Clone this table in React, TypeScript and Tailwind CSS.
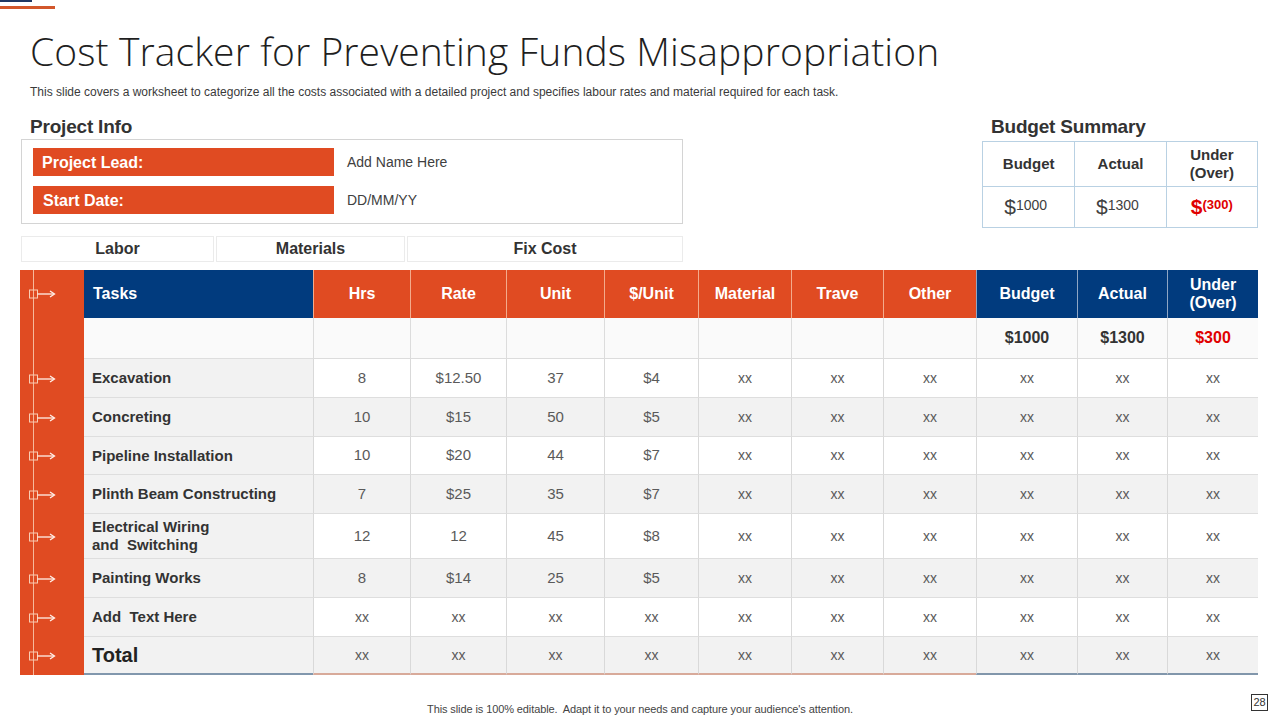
const ORANGE_HEADERS = ["Hrs", "Rate", "Unit", "$/Unit", "Material", "Trave", "Other"];
const NAVY_HEADERS = ["Budget", "Actual"];

const rows = [
  { task: "Excavation", vals: ["8", "$12.50", "37", "$4"] },
  { task: "Concreting", vals: ["10", "$15", "50", "$5"] },
  { task: "Pipeline Installation", vals: ["10", "$20", "44", "$7"] },
  { task: "Plinth Beam Constructing", vals: ["7", "$25", "35", "$7"] },
  { task: "Electrical Wiring", task2: "and  Switching", vals: ["12", "12", "45", "$8"] },
  { task: "Painting Works", vals: ["8", "$14", "25", "$5"] },
  { task: "Add  Text Here", vals: ["xx", "xx", "xx", "xx"] },
  { task: "Total", vals: ["xx", "xx", "xx", "xx"], total: true },
];

function RailCell({ icon }: { icon: boolean }) {
  return (
    <div className="relative bg-[#e04b22]">
      <div className="absolute left-[13px] top-0 bottom-0 w-px bg-[#f6b99c]" />
      {icon && (
        <div className="absolute inset-0 flex items-center">
          <svg width="36" height="12" viewBox="0 0 36 12" className="ml-[9px]">
            <rect x="0.5" y="2" width="8" height="8" fill="none" stroke="#f9cdb4" strokeWidth="1" />
            <line x1="8.5" y1="6" x2="25" y2="6" stroke="#fff1ea" strokeWidth="1.3" />
            <path d="M21 3 L25.5 6 L21 9" fill="none" stroke="#fff1ea" strokeWidth="1.3" />
          </svg>
        </div>
      )}
    </div>
  );
}

function Money({ amount, red }: { amount: string; red?: boolean }) {
  return (
    <span className={`inline-flex items-start ${red ? "text-[#e00000] font-bold" : "text-[#404040]"}`}>
      <span className="text-[21px] leading-[22px]">$</span>
      <span className={`${red ? "text-[13px]" : "text-[14px]"} leading-[16px] mt-[1px]`}>{amount}</span>
    </span>
  );
}

export default function App() {
  return (
    <div
      className="relative w-[1280px] h-[720px] overflow-hidden bg-white text-[#333]"
      style={{ fontFamily: '"Liberation Sans", Arial, sans-serif' }}
    >
      {/* top accent lines */}
      <div className="flex flex-col">
        <div className="h-[2px] w-[32px] bg-[#1f3864]" />
        <div className="mt-[4px] h-[3px] w-[55px] bg-[#d2572b]" />
      </div>

      <h1
        className="mt-[18px] pl-[30px] text-[39px] leading-[48px] font-light text-[#1f1f1f] tracking-[0.1px]"
        style={{ fontFamily: '"Open Sans", sans-serif' }}
      >
        Cost Tracker for Preventing Funds Misappropriation
      </h1>
      <p className="mt-[9px] pl-[30px] text-[12px] leading-[16px] text-[#3a3a3a]">
        This slide covers a worksheet to categorize all the costs associated with a detailed project and specifies labour rates and material required for each task.
      </p>

      <div className="mt-[15px] flex">
        {/* Project info */}
        <div className="ml-[21px] w-[662px]">
          <h2 className="pl-[9px] text-[19px] leading-[24px] font-bold text-[#333] tracking-[-0.2px]">Project Info</h2>
          <div className="h-[85px] border border-[#d4d4d4] pl-[11px] pt-[8px] flex flex-col gap-[10px]">
            <div className="flex items-center">
              <div className="w-[301px] h-[28px] bg-[#e04b22] flex items-center pl-[9px] pt-[1px] text-[16px] font-bold text-white">
                Project Lead:
              </div>
              <span className="ml-[13px] mt-[1px] text-[14px] text-[#404040]">Add Name Here</span>
            </div>
            <div className="flex items-center">
              <div className="w-[301px] h-[28px] bg-[#e04b22] flex items-center pl-[10px] pt-[1px] text-[16px] font-bold text-white">
                Start Date:
              </div>
              <span className="ml-[13px] text-[14px] text-[#404040]">DD/MM/YY</span>
            </div>
          </div>
          <div className="mt-[12px] flex gap-[2px] text-[16px] font-bold text-[#333]">
            <div className="w-[193px] h-[26px] border border-[#ebebeb] flex items-center justify-center">Labor</div>
            <div className="w-[189px] h-[26px] border border-[#ebebeb] flex items-center justify-center">Materials</div>
            <div className="w-[276px] h-[26px] border border-[#ebebeb] flex items-center justify-center">Fix Cost</div>
          </div>
        </div>

        {/* Budget summary */}
        <div className="ml-auto mr-[22px] w-[276px]">
          <h2 className="pl-[9px] text-[19px] leading-[24px] font-bold text-[#333] tracking-[-0.2px]">Budget Summary</h2>
          <div className="mt-[2px] grid grid-cols-3 grid-rows-[44px_41px] border border-[#b9d1e3]">
            <div className="flex items-center justify-center text-[15px] font-bold text-[#333]">Budget</div>
            <div className="flex items-center justify-center text-[15px] font-bold text-[#333] border-l border-[#b9d1e3]">Actual</div>
            <div className="flex items-center justify-center text-center text-[15px] leading-[18px] font-bold text-[#333] border-l border-[#b9d1e3]">
              Under
              <br />
              (Over)
            </div>
            <div className="flex items-center justify-center pr-[6px] border-t border-[#b9d1e3]">
              <Money amount="1000" />
            </div>
            <div className="flex items-center justify-center pr-[6px] border-t border-l border-[#b9d1e3]">
              <Money amount="1300" />
            </div>
            <div className="flex items-center justify-center border-t border-l border-[#b9d1e3]">
              <Money amount="(300)" red />
            </div>
          </div>
        </div>
      </div>

      {/* Main cost table */}
      <div className="mt-[8px] ml-[20px] grid grid-cols-[64px_229px_97px_96px_98px_94px_93px_92px_93px_101px_90px_91px] grid-rows-[48px_41px_39px_39px_38px_39px_45px_39px_39px_38px]">
        {/* header */}
        <RailCell icon />
        <div className="bg-[#013b7e] flex items-center pl-[9px] text-[16px] font-bold text-white">Tasks</div>
        {ORANGE_HEADERS.map((h) => (
          <div
            key={h}
            className="bg-[#e04b22] border-l border-[#f3ab8c] flex items-center justify-center text-[16px] font-bold text-white"
          >
            {h}
          </div>
        ))}
        {NAVY_HEADERS.map((h) => (
          <div
            key={h}
            className="bg-[#013b7e] border-l border-[#8fa6c4] flex items-center justify-center text-[16px] font-bold text-white"
          >
            {h}
          </div>
        ))}
        <div className="bg-[#013b7e] border-l border-[#8fa6c4] flex items-center justify-center text-center text-[16px] leading-[18px] font-bold text-white">
          Under
          <br />
          (Over)
        </div>

        {/* budget totals row */}
        <RailCell icon={false} />
        <div className="bg-[#fafafa] border-b border-[#dedede]" />
        {ORANGE_HEADERS.map((h) => (
          <div key={h} className="bg-[#fafafa] border-l border-b border-[#dcdcdc]" />
        ))}
        <div className="bg-[#fafafa] border-l border-b border-[#dcdcdc] flex items-center justify-center text-[16px] font-bold text-[#333]">$1000</div>
        <div className="bg-[#fafafa] border-l border-b border-[#dcdcdc] flex items-center justify-center text-[16px] font-bold text-[#333]">$1300</div>
        <div className="bg-[#fafafa] border-l border-b border-[#dcdcdc] flex items-center justify-center text-[16px] font-bold text-[#e00000]">$300</div>

        {rows.map((r, i) => {
          const last = i === rows.length - 1;
          const stripe = i % 2 === 0 ? "bg-white" : "bg-[#f2f2f2]";
          const cells = [...r.vals, "xx", "xx", "xx", "xx", "xx", "xx"];
          return [
            <RailCell key={`rail-${i}`} icon />,
            <div
              key={`task-${i}`}
              className={`bg-[#f2f2f2] flex flex-col justify-center pl-[8px] font-bold whitespace-pre ${
                last
                  ? "border-b-2 border-[#8197ad] text-[20px] text-[#222]"
                  : "border-b border-[#dedede] text-[15px] leading-[18px] text-[#333]"
              }`}
            >
              <span>{r.task}</span>
              {r.task2 && <span>{r.task2}</span>}
            </div>,
            ...cells.map((v, j) => (
              <div
                key={`c-${i}-${j}`}
                className={`${stripe} border-l border-[#d9d9d9] flex items-center justify-center text-[#5a5a5a] ${
                  v === "xx" ? "text-[14px]" : "text-[15px]"
                } ${
                  last
                    ? j < 7
                      ? "border-b-2 border-b-[#d8aa9a]"
                      : "border-b-2 border-b-[#8196ab]"
                    : "border-b border-b-[#dedede]"
                }`}
              >
                {v}
              </div>
            )),
          ];
        })}
      </div>

      {/* footer */}
      <p className="mt-[27px] text-center text-[11px] leading-[14px] text-[#444] tracking-[-0.1px]">
        This slide is 100% editable.&nbsp; Adapt it to your needs and capture your audience&apos;s attention.
      </p>
      <div className="absolute right-[12px] bottom-[9px] w-[17px] h-[17px] border border-[#333] flex items-center justify-center text-[11px] text-[#333]">
        28
      </div>
    </div>
  );
}
